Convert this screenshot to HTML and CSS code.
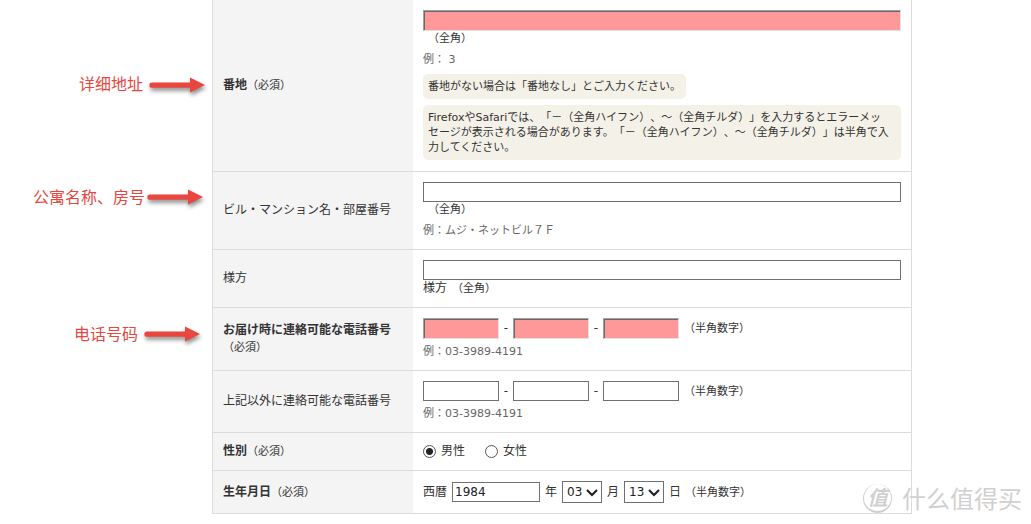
FILE: index.html
```html
<!DOCTYPE html>
<html lang="ja">
<head>
<meta charset="utf-8">
<title>お届け先の入力</title>
<link rel="stylesheet" href="styles.css">
</head>
<body>
<svg class="defs" width="0" height="0" aria-hidden="true">
  <symbol id="arrow" viewBox="0 0 58 22">
    <path class="arrow-shape" d="M3 5.500H41V.5L56 8 41 15.500V10.800H3A2.600 2.600 0 0 1 3 5.500Z"/>
  </symbol>
  <symbol id="chevron" viewBox="0 0 12 8">
    <path d="M1 1L6 6 11 1" fill="none" stroke="#222" stroke-width="2.200"/>
  </symbol>
</svg>
<form class="form">
  <div class="row row-first">
    <div class="note note-middle" lang="zh-CN"><span>详细地址</span><svg class="arrow"><use href="#arrow"/></svg></div>
    <div class="cells">
      <div class="label"><label for="banchi"><b>番地</b><small>（必須）</small></label></div>
      <div class="field">
        <input class="text wide required" id="banchi" type="text">
        <p class="line-hint"><span class="hint">（全角）</span></p>
        <p class="example">例： 3</p>
        <p class="tip">番地がない場合は「番地なし」とご入力ください。</p>
        <p class="tip">FirefoxやSafariでは、「－（全角ハイフン）、～（全角チルダ）」を入力するとエラーメッセージが表示される場合があります。「－（全角ハイフン）、～（全角チルダ）」は半角で入力してください。</p>
      </div>
    </div>
  </div>

  <div class="row">
    <div class="note note-building" lang="zh-CN"><span>公寓名称、房号</span><svg class="arrow"><use href="#arrow"/></svg></div>
    <div class="cells">
      <div class="label"><label for="building">ビル・マンション名・部屋番号</label></div>
      <div class="field">
        <input class="text wide" id="building" type="text">
        <p class="line-hint"><span class="hint">（全角）</span></p>
        <p class="example">例：ムジ・ネットビル７Ｆ</p>
      </div>
    </div>
  </div>

  <div class="row">
    <div class="note"></div>
    <div class="cells">
      <div class="label"><label for="care-of">様方</label></div>
      <div class="field">
        <input class="text wide" id="care-of" type="text">
        <p>様方<small class="hint">（全角）</small></p>
      </div>
    </div>
  </div>

  <div class="row">
    <div class="note note-phone" lang="zh-CN"><span>电话号码</span><svg class="arrow"><use href="#arrow"/></svg></div>
    <div class="cells">
      <div class="label"><label for="tel1"><b>お届け時に連絡可能な電話番号</b><br><small>（必須）</small></label></div>
      <div class="field">
        <div class="phone">
          <input class="text part required" id="tel1" type="text"><span class="dash">-</span><input class="text part required" type="text" aria-label="電話番号 2"><span class="dash">-</span><input class="text part required" type="text" aria-label="電話番号 3"><small class="hint">（半角数字）</small>
        </div>
        <p class="example">例：03-3989-4191</p>
      </div>
    </div>
  </div>

  <div class="row">
    <div class="note"></div>
    <div class="cells">
      <div class="label"><label for="alt1">上記以外に連絡可能な電話番号</label></div>
      <div class="field">
        <div class="phone">
          <input class="text part" id="alt1" type="text"><span class="dash">-</span><input class="text part" type="text" aria-label="予備電話番号 2"><span class="dash">-</span><input class="text part" type="text" aria-label="予備電話番号 3"><small class="hint">（半角数字）</small>
        </div>
        <p class="example">例：03-3989-4191</p>
      </div>
    </div>
  </div>

  <div class="row">
    <div class="note"></div>
    <div class="cells">
      <div class="label"><span><b>性別</b><small>（必須）</small></span></div>
      <div class="field">
        <div class="choices">
          <label class="choice"><input class="radio" type="radio" name="sex" checked>男性</label>
          <label class="choice"><input class="radio" type="radio" name="sex">女性</label>
        </div>
      </div>
    </div>
  </div>

  <div class="row">
    <div class="note"></div>
    <div class="cells">
      <div class="label"><label for="year"><b>生年月日</b><small>（必須）</small></label></div>
      <div class="field">
        <div class="date">
          <span>西暦</span>
          <input class="text year" id="year" type="text" value="1984">
          <label for="year">年</label>
          <span class="picker"><select id="month"><option>03</option></select><svg class="chevron"><use href="#chevron"/></svg></span>
          <label for="month">月</label>
          <span class="picker"><select id="day"><option>13</option></select><svg class="chevron"><use href="#chevron"/></svg></span>
          <label for="day">日<small class="hint">（半角数字）</small></label>
        </div>
      </div>
    </div>
  </div>
</form>

<div class="watermark" lang="zh-CN"><span class="seal">值</span><span>什么值得买</span></div>
</body>
</html>
```
FILE: styles.css
```css
* { box-sizing: border-box; }

body {
  margin: 0;
  background: #fff;
  color: #333;
  font: 12px/17px "DejaVu Sans", "Noto Sans CJK JP", sans-serif;
  text-spacing-trim: space-all;
  line-break: strict;
}

p { margin: 0; }
small { font-size: 11px; }
.defs { position: absolute; }

.row { display: flex; }
.cells {
  display: flex;
  flex: 0 1 700px;
  min-width: 0;
  border: solid #dcdcdc;
  border-width: 0 1px 1px;
}
.label {
  display: flex;
  align-items: center;
  flex: 0 0 200px;
  padding: 0 10px;
  background: #f4f4f4;
}
.field {
  flex: 1;
  min-width: 0;
  padding: 10px;
}
.row-first .field { padding-bottom: 11px; }

/* Margin notes */
.note {
  display: flex;
  flex: 0 0 212px;
  justify-content: flex-end;
  align-items: flex-start;
  gap: 6px;
  padding-right: 5px;
  color: #e8463f;
  font: 16px/20px "Noto Sans CJK SC", sans-serif;
}
.note-middle { align-items: center; padding-bottom: 6px; }
.note-building { padding: 14px 7px 0 0; gap: 2px; }
.note-phone { padding: 15px 10px 0 0; }
.arrow {
  width: 58px;
  height: 22px;
  margin-top: 3px;
  overflow: visible;
  filter: drop-shadow(1px 3px 2px rgba(0, 0, 0, .45));
}
.note-middle .arrow { margin-top: 9px; }

.arrow-shape { fill: #e8463f; }

/* Controls */
.text {
  display: block;
  height: 20px;
  margin: 0;
  padding: 0 2px;
  border: 1px solid #707070;
  border-radius: 0;
  background: #fff;
  color: #222;
  font: inherit;
}
.wide { width: 100%; }
.part { width: 76px; }
.year { width: 88px; }
.required {
  height: 21px;
  border-color: #a0a0a0 #e3e3e3 #e3e3e3 #a0a0a0;
  background: #f99;
  box-shadow: inset 1px 1px 0 #696969;
}
.phone { display: flex; align-items: center; }
.dash { width: 14px; text-align: center; }
.hint { margin-left: 5px; }
.line-hint { font-size: 11px; line-height: 16px; }
.example {
  margin-top: 5px;
  color: #666;
  font-size: 11px;
  line-height: 16px;
}
.tip {
  width: fit-content;
  margin-top: 6px;
  padding: 5px;
  border-radius: 5px;
  background: #f4f1e8;
  font-size: 11px;
  line-height: 15px;
}

.choices { display: flex; gap: 20px; }
.choice { display: flex; align-items: center; gap: 5px; }
.radio {
  appearance: none;
  width: 13px;
  height: 13px;
  margin: 0;
  border: 1px solid #555;
  border-radius: 50%;
  background: #fff;
}
.radio:checked { background: radial-gradient(circle, #222 3px, #fff 4px); }

.date { display: flex; align-items: center; gap: 5px; }
.date .hint { margin-left: 4px; }
.picker { position: relative; display: block; }
.picker select {
  appearance: none;
  display: block;
  width: 40px;
  height: 22px;
  margin: 0;
  padding: 0 0 0 4px;
  border: 1px solid #707070;
  border-radius: 0;
  background: #fff;
  color: #222;
  font: inherit;
}
.chevron {
  position: absolute;
  top: 8px;
  right: 4px;
  width: 12px;
  height: 8px;
  pointer-events: none;
}

/* Site mark laid over the corner of the page */
.watermark {
  position: absolute;
  right: 9px;
  bottom: 11px;
  display: flex;
  align-items: center;
  gap: 10px;
  color: #d0d0d0;
  font: 24px/30px "Noto Sans CJK SC", sans-serif;
}
.seal {
  width: 29px;
  height: 29px;
  border: solid #d0d0d0;
  border-width: 0 1px 2px;
  border-radius: 50%;
  font-size: 20px;
  font-weight: 700;
  font-style: italic;
  line-height: 26px;
  text-align: center;
}
```
